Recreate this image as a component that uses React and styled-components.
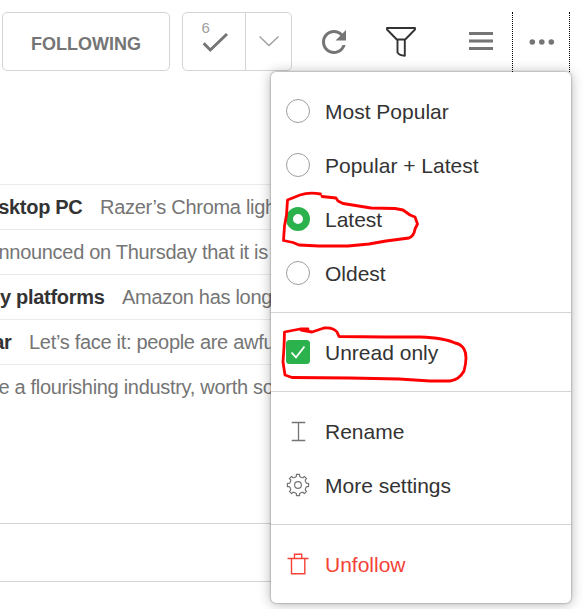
import React from "react";
import styled, { createGlobalStyle } from "styled-components";

const GlobalStyle = createGlobalStyle`
  * { box-sizing: border-box; }
  body { margin: 0; background: #fff; overflow: hidden; font-family: "Liberation Sans", Arial, sans-serif; }
`;

const Page = styled.main`
  position: relative;
  width: 585px;
  height: 609px;
  overflow: hidden;
  background: #fff;
`;

const Toolbar = styled.header`
  display: flex;
  height: 72px;
  padding: 12px 0 0 2px;
`;

const FollowingButton = styled.button`
  width: 168px;
  height: 59px;
  margin-right: 12px;
  padding: 5px 0 0;
  border: 1px solid #d4d4d4;
  border-radius: 5px;
  background: #fff;
  color: #757575;
  font: bold 18px "Liberation Sans", Arial, sans-serif;
`;

const SplitButton = styled.div`
  display: flex;
  width: 110px;
  height: 59px;
  border: 1px solid #d4d4d4;
  border-radius: 5px;
`;

const MarkRead = styled.button`
  display: flex;
  flex-direction: column;
  align-items: flex-start;
  width: 63px;
  padding: 7px 0 0 18px;
  border: 0;
  border-right: 1px solid #d4d4d4;
  background: none;
`;

const Count = styled.span`
  height: 13px;
  padding-left: 0.5px;
  color: #9e9e9e;
  font: 15px/15px "Liberation Sans", Arial, sans-serif;
`;

const IconButton = styled.button`
  display: flex;
  align-items: center;
  justify-content: center;
  width: ${(p) => p.$width}px;
  height: ${(p) => p.$height || 60}px;
  margin-left: ${(p) => p.$gap || 0}px;
  padding: 0;
  border: 0;
  background: none;
`;

const MoreButton = styled(IconButton)`
  border-left: 1px dotted #000;
  border-right: 1px dotted #000;
`;

const Icon = styled.svg`
  display: block;
  flex: none;
  overflow: visible;
`;

const Articles = styled.section`
  width: 560px;
  margin-top: 112px;
`;

const Article = styled.article`
  display: flex;
  height: 45px;
  border-top: 1px solid #ebebeb;
  font-size: 20px;
  line-height: 44px;
  letter-spacing: -0.3px;
  white-space: nowrap;
`;

const Headline = styled.strong`
  display: flex;
  justify-content: flex-end;
  flex: none;
  width: ${(p) => p.$width}px;
  margin-right: 17.5px;
  color: #333;
`;

const Summary = styled.span`
  margin-left: ${(p) => p.$shift || 0}px;
  color: #757575;
`;

const FooterRow = styled.div`
  width: 560px;
  height: 58px;
  margin-top: ${(p) => p.$gap || 0}px;
  border-top: 1px solid #d4d4d4;
`;

const Menu = styled.nav`
  position: absolute;
  left: 271px;
  top: 72px;
  width: 300px;
  border-radius: 5px;
  background: #fff;
  box-shadow: 0 0 2px rgba(0, 0, 0, 0.5), 0 1px 13px rgba(0, 0, 0, 0.3);
`;

const Group = styled.div`
  padding: 12px 0;
  & + & { border-top: 1px solid #d4d4d4; }
`;

const Item = styled.div`
  display: flex;
  align-items: center;
  gap: 15px;
  height: 54px;
  padding-left: 15px;
  color: ${(p) => (p.$danger ? "#f44336" : "#333")};
  font-size: 21px;
`;

const ItemLabel = styled.span`
  padding-top: 2px;
  line-height: 24px;
`;

const Radio = styled.span`
  width: 24px;
  height: 24px;
  border: ${(p) => (p.$checked ? "7.5px solid #2bb24c" : "1px solid #9e9e9e")};
  border-radius: 50%;
`;

const Annotation = styled.svg`
  position: absolute;
  left: 0;
  top: 0;
  pointer-events: none;
`;

const ARTICLES = [
  { title: "sktop PC", width: 82.5, text: "Razer’s Chroma ligh" },
  { text: "nnounced on Thursday that it is", shift: -1.5 },
  { title: "y platforms", width: 104.5, text: "Amazon has long" },
  { title: "ar", width: 11.5, text: "Let’s face it: people are awfu" },
  { text: "e a flourishing industry, worth so", shift: -1.6 },
];

const SORTS = ["Most Popular", "Popular + Latest", "Latest", "Oldest"];

// Outline of an eight-toothed cog centred on (12, 12).
const gearPath = (() => {
  const points = [];
  for (let i = 0; i < 8; i += 1) {
    const a = (i * Math.PI) / 4;
    [[-0.33, 8.3], [-0.17, 8.9], [-0.15, 10.7], [0.15, 10.7], [0.17, 8.9], [0.33, 8.3]].forEach(([d, r]) => {
      points.push(`${(12 + Math.sin(a + d) * r).toFixed(2)} ${(12 - Math.cos(a + d) * r).toFixed(2)}`);
    });
  }
  return `M${points.join("L")}Z`;
})();

export default function App() {
  return (
    <Page>
      <GlobalStyle />
      <Toolbar>
        <FollowingButton>FOLLOWING</FollowingButton>
        <SplitButton>
          <MarkRead>
            <Count>6</Count>
            <Icon width="28" height="22" viewBox="0 0 28 22">
              <path d="M2.7 10.3L9.3 17L26 1" fill="none" stroke="#757575" strokeWidth="3" />
            </Icon>
          </MarkRead>
          <IconButton $width={45} $height={55}>
            <Icon width="20" height="12" viewBox="0 0 20 12">
              <path d="M.5 1.5L10 10.5L19.5 1.5" fill="none" stroke="#9e9e9e" strokeWidth="1.3" />
            </Icon>
          </IconButton>
        </SplitButton>
        <IconButton $width={40} $gap={22}>
          <Icon width="24" height="24" viewBox="4 4 16 16">
            <path d="M17.65 6.35C16.2 4.9 14.21 4 12 4c-4.42 0-7.99 3.58-7.99 8s3.57 8 7.99 8c3.73 0 6.84-2.55 7.73-6h-2.08c-.82 2.33-3.04 4-5.65 4-3.31 0-6-2.69-6-6s2.69-6 6-6c1.66 0 3.14.69 4.22 1.78L13 11h7V4l-2.35 2.35z" fill="#757575" />
          </Icon>
        </IconButton>
        <IconButton $width={40} $gap={27}>
          <Icon width="30" height="30" viewBox="0 0 30 30">
            <path d="M1 1H29V2.5L19.2 12.5H10.8L1 2.5ZM11.5 12.5V25.5Q13.5 28.5 18.8 28.8V12.5" fill="none" stroke="#333" strokeWidth="1.9" strokeLinejoin="round" />
          </Icon>
        </IconButton>
        <IconButton $width={40} $height={58} $gap={40}>
          <Icon width="24" height="18" viewBox="0 0 24 18" shapeRendering="crispEdges">
            <path d="M0 0H24V3H0ZM0 8H24V10H0ZM0 15H24V18H0Z" fill="#757575" />
            <path d="M0 7H24V8H0ZM0 10H24V11H0Z" fill="#b5b5b5" />
          </Icon>
        </IconButton>
        <MoreButton $width={58} $gap={11}>
          <Icon width="24" height="6" viewBox="0 0 24 6">
            <circle cx="3.3" cy="3" r="2.8" fill="#757575" />
            <circle cx="12.8" cy="3" r="2.8" fill="#757575" />
            <circle cx="22.3" cy="3" r="2.8" fill="#757575" />
          </Icon>
        </MoreButton>
      </Toolbar>

      <Articles>
        {ARTICLES.map(({ title, width, text, shift }) => (
          <Article key={text}>
            {title && <Headline $width={width}>{title}</Headline>}
            <Summary $shift={shift}>{text}</Summary>
          </Article>
        ))}
      </Articles>
      <FooterRow $gap={114} />
      <FooterRow />

      <Menu>
        <Group>
          {SORTS.map((label) => (
            <Item key={label}>
              <Radio $checked={label === "Latest"} />
              <ItemLabel>{label}</ItemLabel>
            </Item>
          ))}
        </Group>
        <Group>
          <Item>
            <Icon width="24" height="24" viewBox="0 0 24 24">
              <rect width="24" height="24" rx="3.5" fill="#2bb24c" />
              <path d="M5.5 12.5L10 17.3L18.5 6.5" fill="none" stroke="#fff" strokeWidth="1.8" />
            </Icon>
            <ItemLabel>Unread only</ItemLabel>
          </Item>
        </Group>
        <Group>
          <Item>
            <Icon width="24" height="24" viewBox="0 0 24 24">
              <path d="M5.7 3.5H19.3M5.7 21.5H19.3M12.5 3.5V21.5" fill="none" stroke="#757575" strokeWidth="1.3" />
            </Icon>
            <ItemLabel>Rename</ItemLabel>
          </Item>
          <Item>
            <Icon width="24" height="24" viewBox="0 0 24 24" fill="none" stroke="#757575" strokeWidth="1.2">
              <path d={gearPath} strokeLinejoin="round" />
              <circle cx="12" cy="12" r="3.4" />
            </Icon>
            <ItemLabel>More settings</ItemLabel>
          </Item>
        </Group>
        <Group>
          <Item $danger>
            <Icon width="24" height="24" viewBox="0 0 24 24">
              <path d="M1.5 6.5H22.5M5.5 6.5V21.7H18.8V6.5M8.5 6V2.3H15.7V6" fill="none" stroke="#f44336" strokeWidth="1.4" />
            </Icon>
            <ItemLabel>Unfollow</ItemLabel>
          </Item>
        </Group>
      </Menu>

      <Annotation width="585" height="609" viewBox="0 0 585 609" fill="none" stroke="#f00" strokeWidth="2.8" strokeLinecap="round" strokeLinejoin="round">
        <path d="M320.500 194Q309 192 300 195L287.500 200L286.500 215L284.500 226L283.500 240.500L293 242.500L299 245L319 246L348 246L369 244L386 241L409 238Q414 236 415 229L417.500 224L415 217L410 215L403 210L395 208.500L371 208L343 203.500L338 201L336 198L322 196.500" />
        <path d="M308 329L300 329L284.500 332L284 347L283 362L285 375L292 377.500L350 378L399 379L430 381L450 381Q459 380 464 371Q468 356 464 349Q461 344 455 343Q445 338 420 337L385 337L339 336.500L337 332Q333 327 324 328L312 332L301 330" />
      </Annotation>
    </Page>
  );
}
